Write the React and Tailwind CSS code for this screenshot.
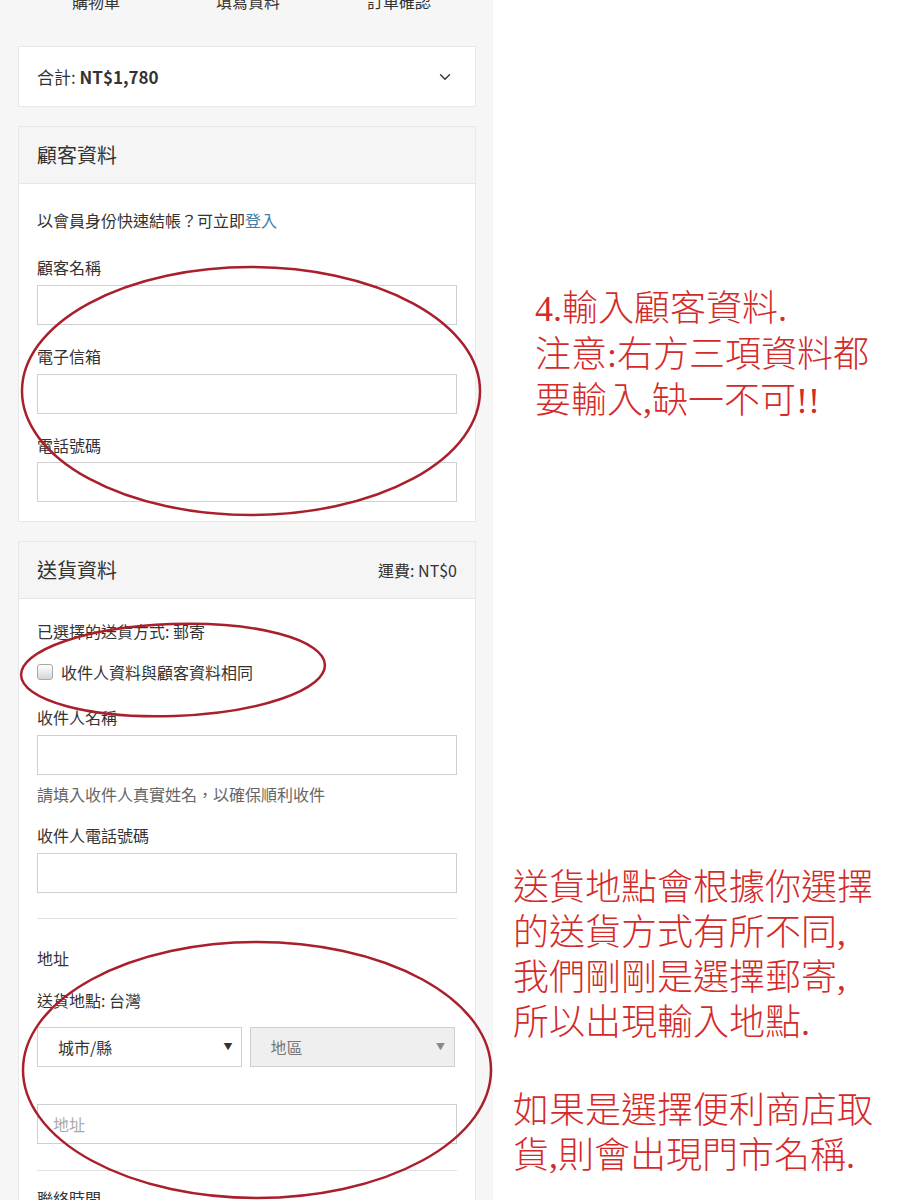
import React from "react";
import { ChevronDown } from "lucide-react";

const sans = { fontFamily: '"Noto Sans CJK TC", "Noto Sans", sans-serif' };

function Label({ children, className = "" }) {
  return <div className={`text-[16px] leading-[24px] text-[#333] ${className}`}>{children}</div>;
}

function Input({ placeholder }) {
  return (
    <div className="h-[40px] border border-[#cfcfcf] bg-white flex items-center px-[15px] text-[16px] text-[#aaa]">
      {placeholder}
    </div>
  );
}

function Card({ title, right, children }) {
  return (
    <div className="border border-[#e8e8e8] bg-white">
      <div className="h-[57px] bg-[#f5f5f5] border-b border-[#e6e6e6] flex items-center justify-between px-[18px]">
        <span className="text-[20px] text-[#333]">{title}</span>
        {right && <span className="text-[16px] text-[#333]">{right}</span>}
      </div>
      {children}
    </div>
  );
}

export default function App() {
  return (
    <div className="relative w-[900px] h-[1200px] overflow-hidden bg-white flex" style={sans}>
      {/* left checkout column */}
      <div className="w-[493px] shrink-0 bg-[#f6f6f6] pl-[18px] pr-[17px]">
        <div className="-mt-[11px] h-[57px] flex text-[16px] leading-[24px] text-[#333]">
          <div className="w-[156px] text-center">購物車</div>
          <div className="w-[148px] text-center">填寫資料</div>
          <div className="w-[154px] text-center">訂單確認</div>
        </div>

        <div className="h-[61px] border border-[#e8e8e8] bg-white flex items-center justify-between pl-[18px] pr-[21px]">
          <span className="text-[17px] text-[#333]">
            合計: <span className="font-bold">NT$1,780</span>
          </span>
          <ChevronDown size={18} strokeWidth={1.8} color="#333" />
        </div>

        <div className="mt-[19px]">
          <Card title="顧客資料">
            <div className="px-[18px] pt-[24px] pb-[19px]">
              <Label>
                以會員身份快速結帳？可立即<span className="text-[#3e7ea6]">登入</span>
              </Label>
              <Label className="mt-[23px] mb-[6px]">顧客名稱</Label>
              <Input />
              <Label className="mt-[19px] mb-[6px]">電子信箱</Label>
              <Input />
              <Label className="mt-[19px] mb-[5px]">電話號碼</Label>
              <Input />
            </div>
          </Card>
        </div>

        <div className="mt-[19px]">
          <Card title="送貨資料" right="運費: NT$0">
            <div className="px-[18px] pt-[20px]">
              <Label>已選擇的送貨方式: 郵寄</Label>
              <div className="mt-[17px] flex items-center gap-[8px] h-[24px]">
                <div className="w-[16px] h-[16px] rounded-[3px] border border-[#a9a9a9] bg-linear-to-b from-[#ffffff] to-[#d6d6d6]" />
                <span className="text-[16px] text-[#333]">收件人資料與顧客資料相同</span>
              </div>
              <Label className="mt-[21px] mb-[6px]">收件人名稱</Label>
              <Input />
              <div className="mt-[7px] text-[16px] leading-[24px] text-[#666]">請填入收件人真實姓名，以確保順利收件</div>
              <Label className="mt-[17px] mb-[6px]">收件人電話號碼</Label>
              <Input />
              <div className="mt-[25px] border-t border-[#e2e2e2]" />
              <Label className="mt-[27px]">地址</Label>
              <Label className="mt-[18px]">送貨地點: 台灣</Label>
              <div className="mt-[15px] flex gap-[8px] pr-[2px]">
                <div className="flex-1 h-[40px] border border-[#cfcfcf] bg-white flex items-center justify-between pl-[20px] pr-[8px] text-[16px] text-[#333]">
                  <span>城市/縣</span>
                  <span className="text-[9px] text-[#333]">▼</span>
                </div>
                <div className="flex-1 h-[40px] border border-[#cfcfcf] bg-[#efefef] flex items-center justify-between pl-[20px] pr-[9px] text-[16px] text-[#777]">
                  <span>地區</span>
                  <span className="text-[9px] text-[#888]">▼</span>
                </div>
              </div>
              <div className="mt-[37px]">
                <Input placeholder="地址" />
              </div>
              <div className="mt-[26px] border-t border-[#e2e2e2]" />
              <Label className="mt-[15px]">聯絡時間</Label>
              <div className="h-[40px]" />
            </div>
          </Card>
        </div>
      </div>

      {/* annotations */}
      <div
        className="flex-1 text-[#d42a2a] text-[36px] leading-[46px] font-light"
        style={{ fontFamily: '"Liberation Serif", "Noto Sans CJK TC", serif' }}
      >
        <div className="pt-[286px] pl-[42px]">
          <div>4.輸入顧客資料.</div>
          <div>注意:右方三項資料都</div>
          <div>要輸入,缺一不可!!</div>
        </div>
        <div className="mt-[442px] pl-[20px] leading-[45px]">
          <div>送貨地點會根據你選擇</div>
          <div>的送貨方式有所不同,</div>
          <div>我們剛剛是選擇郵寄,</div>
          <div>所以出現輸入地點.</div>
          <div className="h-[43px]" />
          <div>如果是選擇便利商店取</div>
          <div>貨,則會出現門市名稱.</div>
        </div>
      </div>

      {/* hand-drawn red ellipses over the form */}
      <svg className="absolute inset-0 pointer-events-none" width="900" height="1200" viewBox="0 0 900 1200">
        <g fill="none" stroke="#a91f2b" strokeWidth="2.5">
          <ellipse cx="251" cy="391" rx="229" ry="124" />
          <ellipse cx="173" cy="670" rx="152" ry="46" transform="rotate(-2 173 670)" />
          <ellipse cx="257" cy="1070" rx="234" ry="128" />
        </g>
      </svg>
    </div>
  );
}
